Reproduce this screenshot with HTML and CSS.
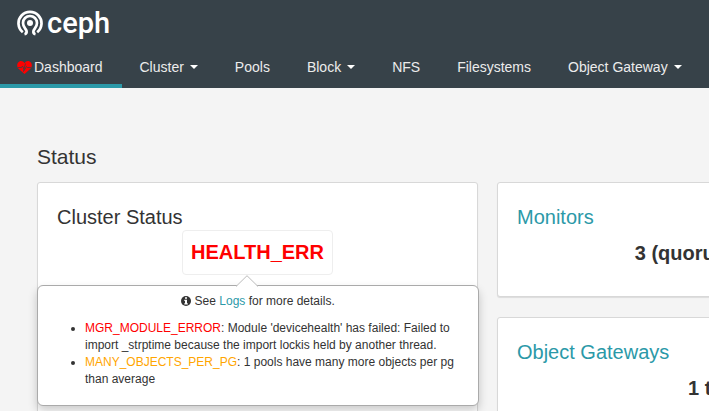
FILE: index.html
```html
<!DOCTYPE html>
<html lang="en">

<head>
    <meta charset="UTF-8" />
    <title>Ceph</title>
    <meta name="viewport" content="width=device-width, initial-scale=1" />
    <link rel="stylesheet" href="styles.css">
</head>

<body>
    <header class="navbar">
        <a class="navbar-brand" href="#">
            <svg class="brand-icon" viewBox="0 0 26 26" aria-hidden="true">
                <g fill="none" stroke="#fff" stroke-width="2.7">
                    <path d="M5.8 22.300A11.500 11.500 0 1 1 20.200 22.300" />
                    <path d="M7.500 24.200C9.200 23.800 9.800 22.800 9.600 21.200C9.300 18.800 6 17.600 6 13A7 7 0 0 1 20 13C20 17.600 16.700 18.800 16.400 21.200C16.200 22.800 16.800 23.800 18.500 24.200" />
                </g>
                <circle cx="13" cy="13" r="3" fill="#fff" />
            </svg>
            <span>ceph</span>
        </a>
        <nav>
            <ul class="nav-list">
                <li class="active">
                    <a href="#">
                        <svg class="heart" viewBox="0 0 15 13" aria-hidden="true">
                            <path fill="#f00" d="M7.500 13L1.300 7.500C-.6 5.400 0 1.400 2.400.4C4.500-.4 6.500.5 7.500 2.200C8.500.5 10.500-.4 12.600.4C15 1.400 15.600 5.400 13.700 7.500Z" />
                            <path fill="none" stroke="#374249" stroke-width=".8" d="M1 6.500H4.500L5.500 5L7 8L8.500 2.500M7 8L6.500 10.500L9.500 5.500L10.500 6.500H14" />
                        </svg>
                        Dashboard
                    </a>
                </li>
                <li><a href="#">Cluster <span class="caret"></span></a></li>
                <li><a href="#">Pools</a></li>
                <li><a href="#">Block <span class="caret"></span></a></li>
                <li><a href="#">NFS</a></li>
                <li><a href="#">Filesystems</a></li>
                <li><a href="#">Object Gateway <span class="caret"></span></a></li>
            </ul>
        </nav>
    </header>

    <main class="dashboard">
        <h1>Status</h1>
        <div class="cards">
            <section class="card">
                <h2>Cluster Status</h2>
                <div class="card-value">
                    <button type="button" class="health" aria-describedby="health-details">HEALTH_ERR</button>
                </div>
                <div class="popover" id="health-details" role="tooltip">
                    <svg class="popover-arrow" viewBox="0 0 22 12" aria-hidden="true">
                        <path fill="#fff" stroke="#bbb" d="M0 11.500L11 .7L22 11.500" />
                    </svg>
                    <p>
                        <svg class="info" viewBox="0 0 10 10" aria-hidden="true">
                            <circle cx="5" cy="5" r="5" fill="#333" />
                            <path fill="#fff" d="M4 1.200H6V2.700H4ZM3.300 3.800H6V7.200H6.800V8.400H3.300V7.200H4V5H3.300Z" />
                        </svg>
                        See <a href="#">Logs</a> for more details.
                    </p>
                    <ul>
                        <li><span class="error">MGR_MODULE_ERROR</span>: Module 'devicehealth' has failed: Failed to import _strptime because the import lockis held by another thread.</li>
                        <li><span class="warning">MANY_OBJECTS_PER_PG</span>: 1 pools have many more objects per pg than average</li>
                    </ul>
                </div>
            </section>
            <section class="card">
                <h2><a href="#">Monitors</a></h2>
                <div class="card-value">3 (quorum 0, 1, 2)</div>
            </section>
            <section class="card"></section>
            <section class="card">
                <h2><a href="#">Object Gateways</a></h2>
                <div class="card-value">1 total</div>
            </section>
        </div>
    </main>
</body>

</html>
```

FILE: styles.css
```css
html {
    overflow: hidden;
}

body {
    margin: 0;
    background-color: #f4f4f4;
    color: #333;
    font-family: "Liberation Sans", Arial, sans-serif;
    font-size: 14px;
}

a {
    color: #2b99a8;
    text-decoration: none;
}

.navbar {
    background-color: #374249;
}

.navbar-brand {
    display: flex;
    align-items: center;
    gap: 4px;
    height: 46px;
    padding-left: 17px;
    box-sizing: border-box;
    color: #fff;
    font-family: Roboto, sans-serif;
    font-size: 29px;
    font-weight: 500;
    line-height: 46px;
}

.brand-icon {
    width: 26px;
    height: 26px;
}

.nav-list {
    display: flex;
    margin: 0;
    padding: 0;
    list-style: none;
}

.nav-list a {
    display: flex;
    align-items: center;
    height: 42px;
    padding: 0 19px 0 18px;
    box-sizing: border-box;
    border-top: 4px solid transparent;
    border-bottom: 4px solid transparent;
    color: #ececec;
    white-space: nowrap;
}

.nav-list .active a {
    padding-left: 17px;
    border-bottom-color: #2b99a8;
}

.heart {
    width: 15px;
    height: 13px;
    margin-right: 2px;
}

.caret {
    margin-left: 6px;
    border-top: 4px solid #fff;
    border-left: 4px solid transparent;
    border-right: 4px solid transparent;
}

.dashboard {
    padding: 56px 37px 20px;
}

h1,
h2 {
    margin: 0;
    font-weight: normal;
}

h1 {
    margin-bottom: 12px;
    font-size: 21px;
    line-height: 26px;
}

h2 {
    font-size: 20px;
    line-height: 26px;
}

.cards {
    display: grid;
    grid-template-columns: repeat(2, minmax(441px, 1fr));
    grid-auto-rows: minmax(115px, auto);
    gap: 20px 19px;
}

.card {
    position: relative;
    padding: 21px 19px 20px;
    box-sizing: border-box;
    background-color: #fff;
    border: 1px solid #d8d8d8;
    border-radius: 3px;
    box-shadow: 0 1px 1px rgba(0, 0, 0, 0.1);
}

.card-value {
    font-size: 20px;
    font-weight: bold;
    line-height: 46px;
    text-align: center;
    white-space: nowrap;
}

.health {
    display: block;
    height: 45px;
    margin: 0 auto;
    padding: 0 8px;
    background-color: #fff;
    border: 1px solid #eee;
    border-radius: 4px;
    color: #f00;
    font: inherit;
    line-height: 43px;
    cursor: pointer;
}

.popover {
    position: absolute;
    top: 102px;
    left: -1px;
    right: -2px;
    z-index: 1;
    padding: 7px 14px;
    background-color: #fff;
    border: 1px solid #aaa;
    border-radius: 6px;
    box-shadow: 0 5px 10px rgba(0, 0, 0, 0.2);
    font-size: 12px;
    line-height: 17px;
}

.popover-arrow {
    position: absolute;
    top: -11px;
    left: 198px;
    width: 22px;
    height: 12px;
}

.popover p {
    margin: 0 0 10px;
    text-align: center;
}

.popover ul {
    margin: 0 0 10px;
    padding-left: 33px;
}

.info {
    width: 10px;
    height: 10px;
    vertical-align: -1px;
}

.error {
    color: #f00;
}

.warning {
    color: #ffa500;
}
```
